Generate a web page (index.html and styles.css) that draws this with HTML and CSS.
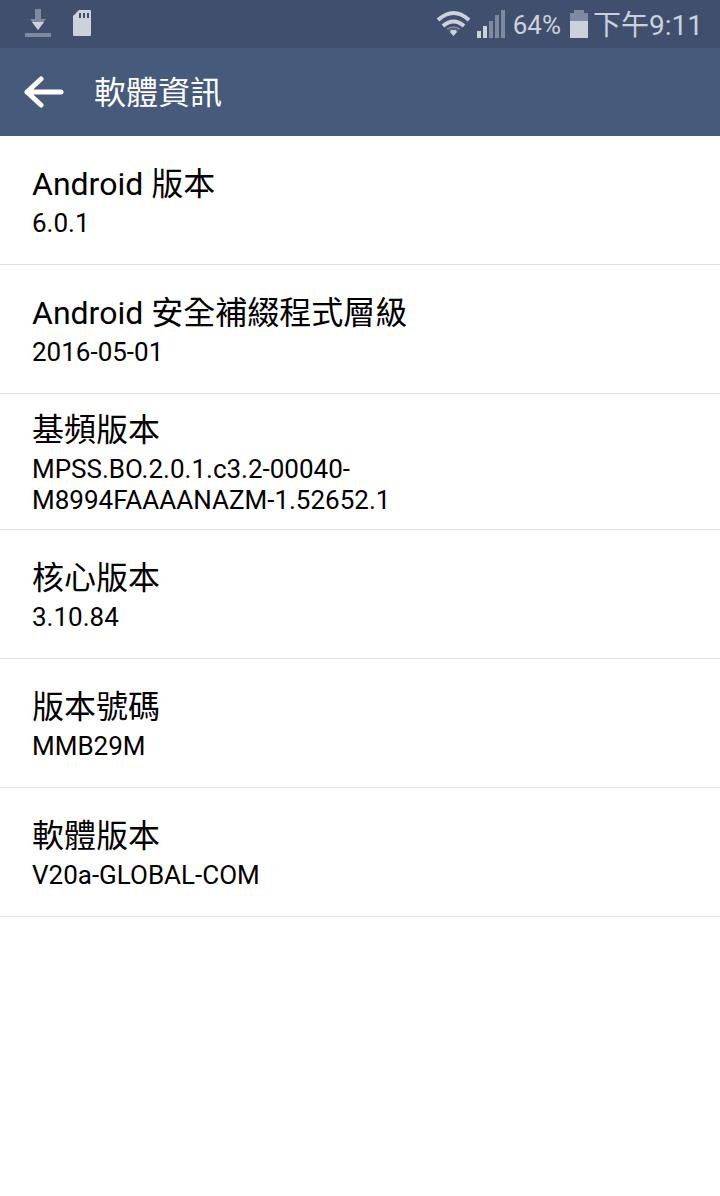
FILE: index.html
```html
<!DOCTYPE html>
<html lang="zh-Hant">
<head>
<meta charset="utf-8">
<meta name="viewport" content="width=device-width, initial-scale=1">
<title>軟體資訊</title>
<link rel="stylesheet" href="styles.css">
</head>
<body>
<div class="status">
  <svg class="icon-download" width="28" height="30" viewBox="0 0 28 30" aria-hidden="true"><path fill="#7f899f" d="M11 0h6v10h5l-8 11-8-11h5zM1 24h26v4H1z"/><path fill="#ccd2dc" d="M8 13h12l-6 8z"/></svg>
  <svg class="icon-card" width="20" height="28" viewBox="0 0 20 28" aria-hidden="true"><path fill="#ccd2dc" d="M7 0h11q1 0 1 1v24q0 1-1 1H2q-1 0-1-1V6z"/><path stroke="#414f6e" stroke-width="2" d="M8 3v5M12 3v5M16 3v5"/></svg>
  <span class="spacer"></span>
  <svg class="icon-wifi" width="34" height="28" viewBox="0 0 34 28" aria-hidden="true"><g fill="none" stroke="#ccd2dc" stroke-width="4"><path d="M2 10Q17.500-4 33 10M7 16q10.500-9 21 0"/></g><path fill="#59647a" d="M11 19q6.500-5 13 0l-4 4h-5z"/><path fill="none" stroke="#99a2b3" stroke-width="1" d="M11 19q6.500-4 13 0"/><path fill="#ccd2dc" d="M15 20h5l1 2-3.500 4-3.500-4z"/></svg>
  <svg class="icon-signal" width="30" height="30" viewBox="0 0 30 30" aria-hidden="true"><path fill="#ccd2dc" d="M1 22h4v7H1zM7 17h4v12H7z"/><path fill="#7f899f" d="M13 12h4v17h-4zM19 6h4v23h-4zM25 1h4v28h-4z"/></svg>
  <span class="battery-text">64%</span>
  <svg class="icon-battery" width="20" height="30" viewBox="0 0 20 30" aria-hidden="true"><path fill="#7f899f" d="M5 1h10v3h4v8H1V4h4z"/><path fill="#ccd2dc" d="M1 12h18v17H1z"/></svg>
  <time class="clock">下午9:11</time>
</div>
<header class="bar">
  <button class="back" type="button" aria-label="返回"><svg width="40" height="32" viewBox="0 0 40 32" aria-hidden="true"><path fill="none" stroke="#fff" stroke-width="5" stroke-linecap="round" stroke-linejoin="round" d="M17 3L3 16l14 13M3 16h34"/></svg></button>
  <h1 class="title">軟體資訊</h1>
</header>
<main>
  <dl class="list">
    <div class="item"><dt>Android 版本</dt><dd>6.0.1</dd></div>
    <div class="item"><dt>Android 安全補綴程式層級</dt><dd>2016-05-01</dd></div>
    <div class="item"><dt>基頻版本</dt><dd>MPSS.BO.2.0.1.c3.2-00040-<br>M8994FAAAANAZM-1.52652.1</dd></div>
    <div class="item"><dt>核心版本</dt><dd>3.10.84</dd></div>
    <div class="item"><dt>版本號碼</dt><dd>MMB29M</dd></div>
    <div class="item"><dt>軟體版本</dt><dd>V20a-GLOBAL-COM</dd></div>
  </dl>
</main>
</body>
</html>
```
FILE: styles.css
```css
* { box-sizing: border-box; }
body { margin: 0; background: #fff; color: #000; font-family: Roboto, "Noto Sans CJK TC", sans-serif; }
.status { display: flex; align-items: center; height: 48px; padding: 0 17px 0 24px; background: #414f6e; color: #ccd2dc; }
.status svg { flex: none; }
.icon-card { margin-left: 20px; }
.spacer { flex: 1; }
.icon-signal { margin-left: 6px; }
.battery-text { margin-left: 7px; padding-top: 2px; font-size: 26px; }
.icon-battery { margin-left: 8px; }
.clock { margin-left: 4px; padding-top: 4px; font-size: 28px; line-height: 44px; }
.bar { display: flex; align-items: center; height: 88px; padding: 0 24px; background: #465a7b; color: #fff; }
.back { display: flex; padding: 0; border: 0; background: none; }
.title { margin: 0 0 0 30px; padding-top: 2px; font-size: 32px; font-weight: 400; line-height: 48px; }
.list { margin: 0; }
.item { display: flex; flex-direction: column; justify-content: center; min-height: 129px; padding: 15px 32px 13px; border-bottom: 1px solid #e2e2e2; }
.item dt { font-size: 32px; line-height: 42px; }
.item dd { margin: 3px 0 0; font-size: 26px; line-height: 31px; }
```
